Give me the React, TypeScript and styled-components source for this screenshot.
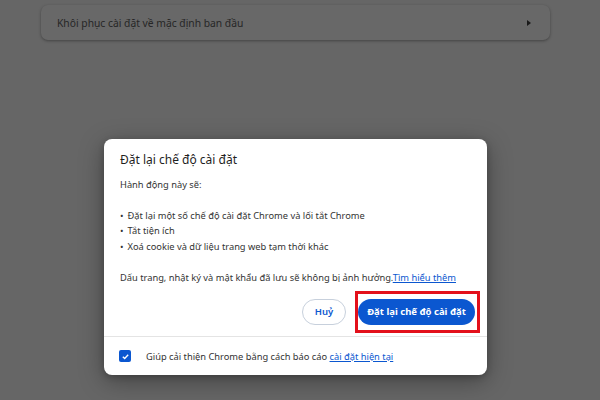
import React from "react";
import styled, { createGlobalStyle } from "styled-components";

const Global = createGlobalStyle`
  html, body { margin: 0; padding: 0; }
  body {
    width: 600px;
    height: 400px;
    overflow: hidden;
    background: #666666;
    font-family: "Noto Sans", "Open Sans", sans-serif;
    -webkit-font-smoothing: antialiased;
  }
`;

const Page = styled.div`
  width: 600px;
  height: 400px;
  display: flex;
  flex-direction: column;
  box-sizing: border-box;
  padding-top: 5px;
`;

const ResetCard = styled.div`
  margin-left: 41px;
  width: 509px;
  height: 35px;
  box-sizing: border-box;
  border-radius: 7px;
  background: #686868;
  box-shadow: 0 1px 3px rgba(0, 0, 0, 0.35);
  display: flex;
  align-items: center;
  justify-content: space-between;
  padding: 0 16px 0 16px;
  color: #262626;
  font-size: 10.3px;
`;

const Arrow = styled.span`
  width: 0;
  height: 0;
  border-top: 3.5px solid transparent;
  border-bottom: 3.5px solid transparent;
  border-left: 4px solid #1a1a1a;
  margin-right: 3px;
`;

const Dialog = styled.div`
  margin-top: 99px;
  margin-left: 104px;
  width: 383px;
  height: 236px;
  box-sizing: border-box;
  background: #ffffff;
  border-radius: 8px;
  box-shadow: 0 6px 24px rgba(0, 0, 0, 0.35), 0 2px 6px rgba(0, 0, 0, 0.2);
  display: flex;
  flex-direction: column;
`;

const Body = styled.div`
  padding: 12px 12px 0 16px;
  color: #1f1f1f;
  display: flex;
  flex-direction: column;
`;

const Title = styled.div`
  font-size: 12px;
  line-height: 18px;
  color: #1f1f1f;
`;

const Text = styled.div<{ $gap?: number }>`
  font-size: 9.3px;
  line-height: 15.5px;
  color: #333333;
  white-space: nowrap;
  margin-top: ${(p) => p.$gap ?? 0}px;
`;

const List = styled.ul`
  list-style: none;
  margin: 15px 0 0 0;
  padding: 0;
  font-size: 9.3px;
  line-height: 15.5px;
  color: #333333;
`;

const Item = styled.li`
  &::before {
    content: "•";
    margin-right: 4px;
  }
`;

const Link = styled.a`
  color: #0b57d0;
  text-decoration: underline;
`;

const Actions = styled.div`
  margin-top: 13px;
  display: flex;
  justify-content: flex-end;
  gap: 12px;
`;

const CancelButton = styled.button`
  height: 26px;
  width: 44px;
  border-radius: 13px;
  border: 1px solid #c7d0dc;
  background: #ffffff;
  color: #0b57d0;
  font-family: inherit;
  font-size: 9.5px;
  font-weight: 600;
  padding: 0;
`;

const Highlight = styled.div`
  position: relative;
  display: flex;
`;

const PrimaryButton = styled.button`
  height: 26px;
  width: 117px;
  border-radius: 13px;
  border: none;
  background: #0b57d0;
  color: #ffffff;
  font-family: inherit;
  font-size: 9.5px;
  font-weight: 700;
  padding: 0;
`;

const RedBox = styled.div`
  position: absolute;
  left: -3px;
  right: -5px;
  top: -8px;
  bottom: -8px;
  border: 3px solid #e3101b;
  pointer-events: none;
`;

const Footer = styled.div`
  margin-top: auto;
  height: 39px;
  box-sizing: border-box;
  border-top: 1px solid #e4e4e4;
  display: flex;
  align-items: center;
  padding-left: 15px;
  gap: 15px;
  font-size: 9.3px;
  color: #333333;
`;

const Check = styled.span`
  width: 12px;
  height: 12px;
  border-radius: 2px;
  background: #0b57d0;
  display: flex;
  align-items: center;
  justify-content: center;
`;

export default function App() {
  return (
    <>
      <Global />
      <Page>
        <ResetCard>
          <span>Khôi phục cài đặt về mặc định ban đầu</span>
          <Arrow />
        </ResetCard>
        <Dialog>
          <Body>
            <Title>Đặt lại chế độ cài đặt</Title>
            <Text $gap={8}>Hành động này sẽ:</Text>
            <List>
              <Item>Đặt lại một số chế độ cài đặt Chrome và lối tắt Chrome</Item>
              <Item>Tắt tiện ích</Item>
              <Item>Xoá cookie và dữ liệu trang web tạm thời khác</Item>
            </List>
            <Text $gap={16}>
              Dấu trang, nhật ký và mật khẩu đã lưu sẽ không bị ảnh hưởng.
              <Link>Tìm hiểu thêm</Link>
            </Text>
            <Actions>
              <CancelButton>Huỷ</CancelButton>
              <Highlight>
                <PrimaryButton>Đặt lại chế độ cài đặt</PrimaryButton>
                <RedBox />
              </Highlight>
            </Actions>
          </Body>
          <Footer>
            <Check>
              <svg width="9" height="9" viewBox="0 0 10 10">
                <path d="M2 5.2 L4.1 7.2 L8 3" fill="none" stroke="#fff" strokeWidth="1.5" />
              </svg>
            </Check>
            <span>
              Giúp cải thiện Chrome bằng cách báo cáo <Link>cài đặt hiện tại</Link>
            </span>
          </Footer>
        </Dialog>
      </Page>
    </>
  );
}
